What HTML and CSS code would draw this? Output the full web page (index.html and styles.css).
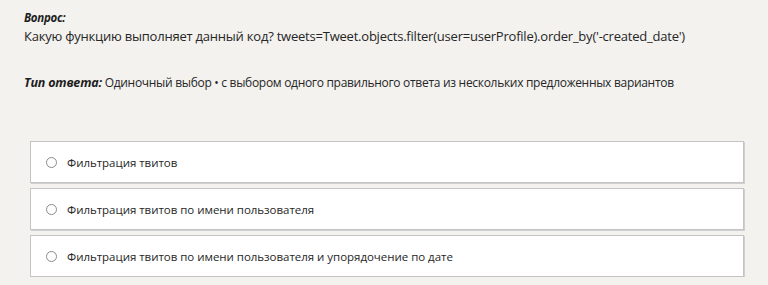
FILE: index.html
```html
<!DOCTYPE html>
<html lang="ru">
<head>
<meta charset="utf-8">
<link rel="stylesheet" href="styles.css">
</head>
<body>
<div class="page">
  <div class="question">
    <div class="label">Вопрос:</div>
    <div class="qtext">Какую функцию выполняет данный код? tweets=Tweet.objects.filter(user=userProfile).order_by('-created_date')</div>
  </div>
  <div class="atype"><span class="label big">Тип ответа:</span> Одиночный выбор • с выбором одного правильного ответа из нескольких предложенных вариантов</div>
  <div class="options">
    <label class="option"><span class="radio"></span><span class="otext">Фильтрация твитов</span></label>
    <label class="option"><span class="radio"></span><span class="otext">Фильтрация твитов по имени пользователя</span></label>
    <label class="option"><span class="radio"></span><span class="otext">Фильтрация твитов по имени пользователя и упорядочение по дате</span></label>
  </div>
</div>
</body>
</html>
```
FILE: styles.css
```css
html, body {
  margin: 0;
  padding: 0;
  background: #f3f2ef;
}
body {
  font-family: "Open Sans", "Noto Sans", sans-serif;
  color: #262626;
}
.page {
  padding: 10px 24px 0 24px;
}
.label {
  font-weight: 700;
  font-style: italic;
  font-size: 11.5px;
  letter-spacing: -0.3px;
  color: #1e1e1e;
}
.label.big {
  font-size: 12.5px;
  letter-spacing: -0.2px;
}
.question .label {
  line-height: 16px;
}
.qtext {
  font-size: 13px;
  line-height: 20px;
  letter-spacing: -0.22px;
}
.atype {
  margin-top: 28px;
  font-size: 12px;
  line-height: 18px;
  letter-spacing: -0.3px;
}
.options {
  margin: 49px 0 0 6px;
  display: flex;
  flex-direction: column;
  gap: 5px;
}
.option {
  display: flex;
  align-items: center;
  height: 40px;
  background: #fff;
  border: 1px solid #c4c4c4;
  box-shadow: 1px 1px 0 #cfcfcf;
  padding-left: 15px;
}
.radio {
  width: 9px;
  height: 9px;
  border: 1px solid #8a8a8a;
  border-radius: 50%;
  background: #fff;
  flex: none;
}
.otext {
  margin-left: 10px;
  font-size: 11.5px;
  color: #262626;
  letter-spacing: -0.03px;
}
```
